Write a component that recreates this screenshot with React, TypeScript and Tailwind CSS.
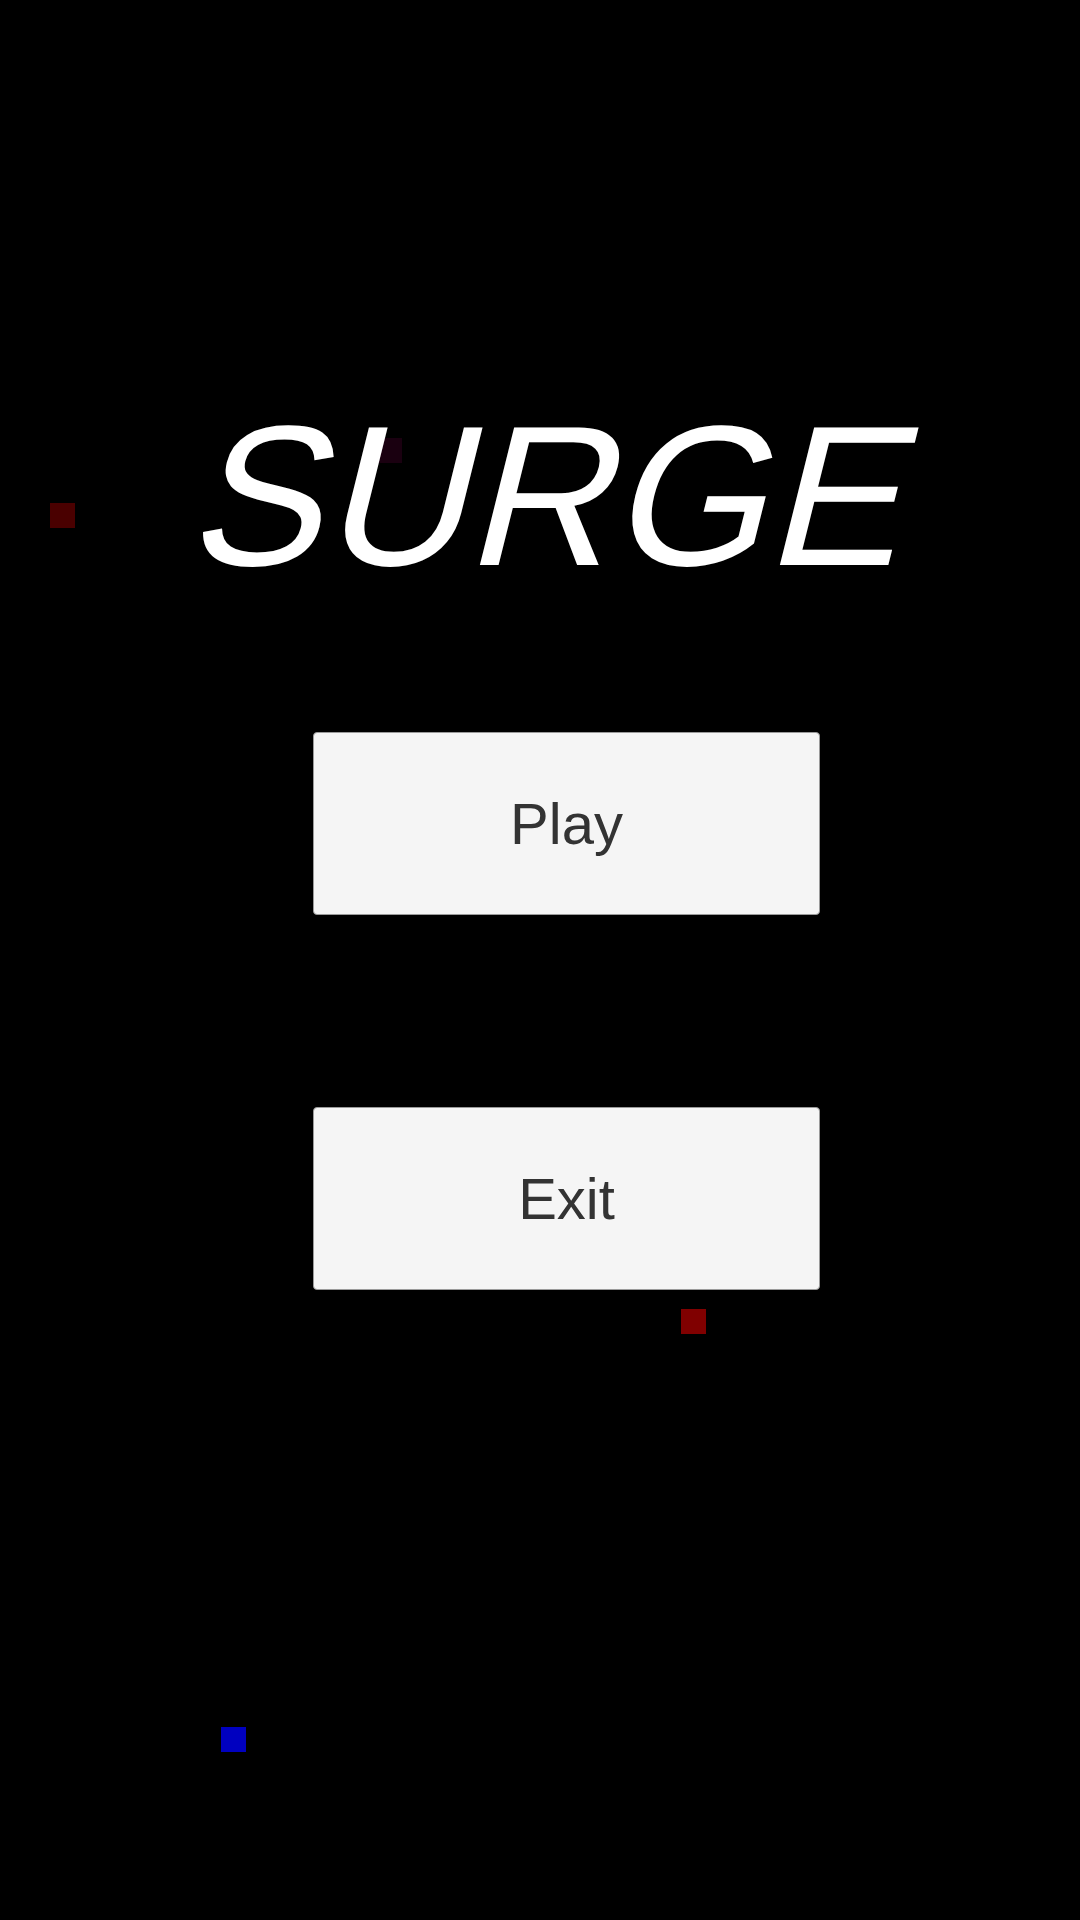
export default function App() {
  return (
    <div className="relative min-h-[1920px] w-full overflow-hidden bg-black font-['Liberation_Sans',Arial,sans-serif]">
      {/* particles */}
      <div className="absolute left-[50px] top-[503px] h-[25px] w-[25px] bg-[#4a0000]" />
      <div className="absolute left-[377px] top-[438px] h-[25px] w-[25px] bg-[#1a0010]" />
      <div className="absolute left-[681px] top-[1309px] h-[25px] w-[25px] bg-[#800000]" />
      <div className="absolute left-[221px] top-[1727px] h-[25px] w-[25px] bg-[#0000c0]" />

      <div className="relative flex flex-col items-center pl-[53px] pt-[396px]">
        <h1 className="mr-[66px] origin-bottom -skew-x-[14deg] text-[200px] font-normal leading-none text-white">
          SURGE
        </h1>
        <button className="mt-[136px] flex h-[183px] w-[507px] items-center justify-center rounded-[4px] border border-[#9a9a9a] bg-[#f5f5f5] text-[58px] text-[#333333]">
          Play
        </button>
        <button className="mt-[192px] flex h-[183px] w-[507px] items-center justify-center rounded-[4px] border border-[#9a9a9a] bg-[#f5f5f5] text-[58px] text-[#333333]">
          Exit
        </button>
      </div>
    </div>
  );
}
